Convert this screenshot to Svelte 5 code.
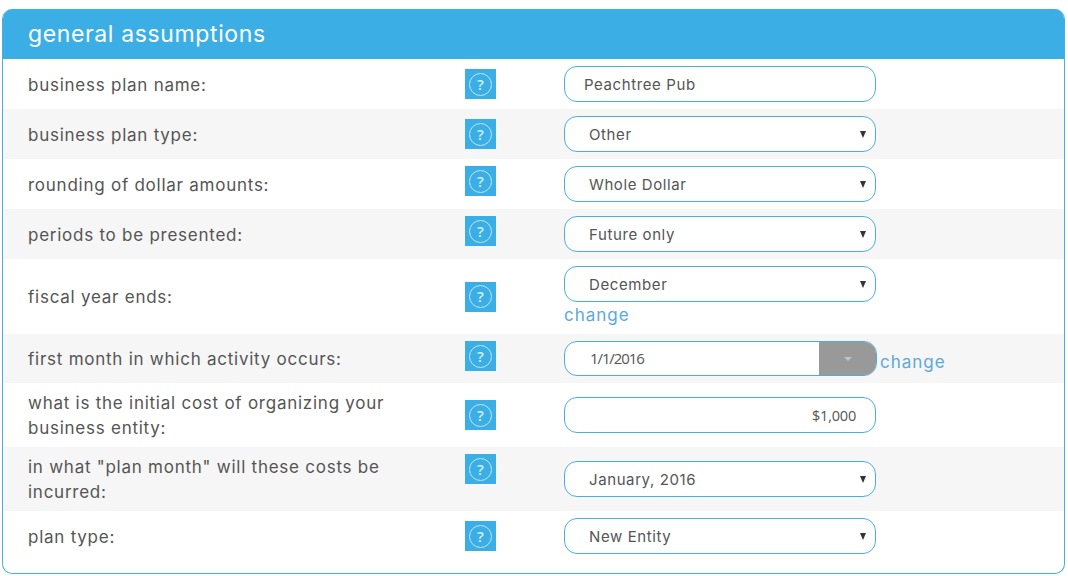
<script>
  const rows = [
    { label: "business plan name:", type: "text", value: "Peachtree Pub" },
    { label: "business plan type:", type: "select", value: "Other", options: ["Retail", "Service", "Other"] },
    { label: "rounding of dollar amounts:", type: "select", value: "Whole Dollar", options: ["Whole Dollar", "Thousands"], lift: 6 },
    { label: "periods to be presented:", type: "select", value: "Future only", options: ["Future only", "Past and future"], lift: 6 },
    { label: "fiscal year ends:", type: "select", value: "December", options: ["June", "September", "December"], change: "below" },
    { label: "first month in which activity occurs:", type: "date", value: "1/1/2016", lift: 5 },
    { label: "what is the initial cost of organizing your business entity:", type: "money", value: "$1,000" },
    { label: 'in what "plan month" will these costs be incurred:', type: "select", value: "January, 2016", options: ["January, 2016", "February, 2016"], lift: 20 },
    { label: "plan type:", type: "select", value: "New Entity", options: ["New Entity", "Existing Entity"] },
  ];
</script>

<section class="panel">
  <h2 class="title">general assumptions</h2>
  <div class="rows">
    {#each rows as row}
      <div class="row">
        <span class="label">{row.label}</span>
        <button class="help" type="button" aria-label="help" style="margin-bottom:{row.lift ?? 0}px">
          <span class="ring">?</span>
        </button>
        <div class="field">
          {#if row.type === "text"}
            <input class="control text" type="text" value={row.value} />
          {:else if row.type === "money"}
            <input class="control money" type="text" value={row.value} />
          {:else if row.type === "select"}
            <div class="pick-wrap">
              <select class="control pick" value={row.value}>
                {#each row.options as option}
                  <option>{option}</option>
                {/each}
              </select>
              <i class="pick-arrow"></i>
            </div>
            {#if row.change === "below"}
              <a class="change stacked" href="#top">change</a>
            {/if}
          {:else}
            <div class="date-line">
              <div class="date">
                <input class="date-input" type="text" value={row.value} />
                <span class="date-btn"><i class="caret"></i></span>
              </div>
              <a class="change" href="#top">change</a>
            </div>
          {/if}
        </div>
      </div>
    {/each}
  </div>
</section>

<style>
  :global(body) {
    margin: 0;
    background: #fff;
  }

  .panel {
    box-sizing: border-box;
    width: 1063px;
    height: 565px;
    margin: 9px 0 0 2px;
    border: 1px solid #4aafdc;
    border-top: 0;
    border-radius: 10px;
    font-family: Inter, "Open Sans", sans-serif;
    color: #555;
    overflow: hidden;
  }

  .title {
    margin: 0 -1px;
    height: 50px;
    padding-left: 26px;
    background: #3bafe5;
    color: #fff;
    font-size: 23px;
    font-weight: 400;
    line-height: 51px;
    letter-spacing: 0.63px;
  }

  .row {
    display: grid;
    grid-template-columns: 437px 99px 312px;
    align-items: center;
    padding: 7px 0 7px 25px;
  }

  .row:nth-child(even) {
    background: #f6f6f6;
  }

  .label {
    max-width: 400px;
    font-size: 17px;
    line-height: 25px;
    letter-spacing: 0.75px;
    transform: translateY(1px);
  }

  .help {
    width: 31px;
    height: 30px;
    padding: 0;
    border: 0;
    background: #3bafe5;
    display: flex;
    align-items: center;
    justify-content: center;
  }

  .ring {
    box-sizing: border-box;
    width: 23px;
    height: 23px;
    border: 1.5px solid #bfe5f7;
    border-radius: 50%;
    color: #d3eefa;
    font: 600 15px/20px "Open Sans", sans-serif;
    text-align: center;
  }

  .field {
    display: flex;
    flex-direction: column;
    align-items: flex-start;
  }

  .control {
    box-sizing: border-box;
    width: 312px;
    height: 36px;
    border: 1px solid #4aafdc;
    border-radius: 13px;
    background: #fff;
    color: #555;
    font: 15px Inter, "Open Sans", sans-serif;
    letter-spacing: 0.6px;
    outline: none;
  }

  .text {
    padding: 0 19px;
  }

  .money {
    padding: 0 19px;
    text-align: right;
    font-family: "Open Sans", sans-serif;
    font-size: 14.5px;
    letter-spacing: -0.2px;
  }

  .pick-wrap {
    position: relative;
    height: 36px;
  }

  .pick {
    display: block;
    padding: 0 24px 0 24px;
    appearance: none;
  }

  .pick-arrow {
    position: absolute;
    left: 296px;
    top: 15px;
    border-left: 3.5px solid transparent;
    border-right: 3.5px solid transparent;
    border-top: 7px solid #333;
    pointer-events: none;
  }

  .change {
    color: #5aa9dc;
    font-size: 17px;
    line-height: 25px;
    letter-spacing: 1px;
    text-decoration: none;
    transform: translateY(1px);
  }

  .stacked {
    height: 25px;
  }

  .date-line {
    display: flex;
    align-items: center;
    gap: 3px;
    width: 400px;
    height: 35px;
  }

  .date {
    box-sizing: border-box;
    flex: none;
    display: flex;
    width: 313px;
    height: 35px;
    border: 1px solid #4aafdc;
    border-radius: 13px;
    background: #fff;
    overflow: hidden;
  }

  .date-input {
    flex: 1;
    min-width: 0;
    padding: 0 0 2px 25px;
    border: 0;
    background: transparent;
    color: #555;
    font: 15px "Open Sans", sans-serif;
    letter-spacing: -1.1px;
    outline: none;
  }

  .date-btn {
    flex: none;
    width: 57px;
    display: flex;
    align-items: center;
    justify-content: center;
    background: #999;
  }

  .caret {
    border-left: 4px solid transparent;
    border-right: 4px solid transparent;
    border-top: 4px solid #b4c6d6;
  }

  .date-line .change {
    margin-top: 6px;
  }
</style>
